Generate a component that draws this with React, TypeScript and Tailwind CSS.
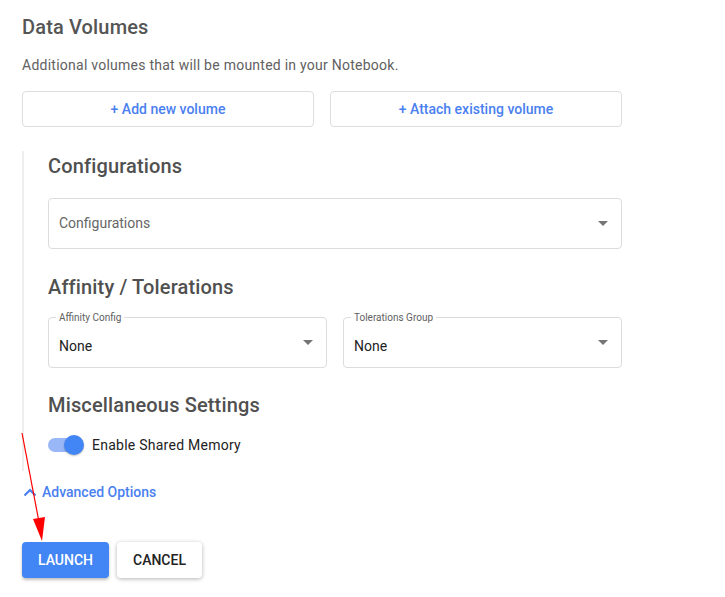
import React from "react";

const Caret = () => (
  <svg width="10" height="5" viewBox="0 0 10 5" className="shrink-0">
    <path d="M0 0 L10 0 L5 5 Z" fill="#757575" />
  </svg>
);

export default function App() {
  return (
    <div
      className="relative w-[725px] h-[597px] bg-white overflow-hidden"
      style={{ fontFamily: "Roboto, 'Liberation Sans', sans-serif" }}
    >
      <div className="pl-[22px] pr-[103px] pt-[15px]">
        <h2 className="text-[20px] leading-[24px] font-medium text-[#555555] tracking-[0.15px]">Data Volumes</h2>
        <p className="mt-[16px] text-[14px] leading-[20px] text-[#616161] tracking-[0.25px]">
          Additional volumes that will be mounted in your Notebook.
        </p>
        <div className="mt-[16px] flex gap-[16px]">
          <button className="flex-1 h-[36px] border border-[#dedede] rounded-[4px] text-[14px] font-medium text-[#4a7ff0]">
            + Add new volume
          </button>
          <button className="flex-1 h-[36px] border border-[#dedede] rounded-[4px] text-[14px] font-medium text-[#4a7ff0]">
            + Attach existing volume
          </button>
        </div>

        <div className="mt-[24px] flex">
          <div className="w-[2px] bg-[#eeeeee] h-[320px] shrink-0" />
          <div className="flex-1 pl-[24px]">
            <h3 className="text-[20px] leading-[24px] font-medium text-[#505050] mt-[3px] tracking-[0.15px]">Configurations</h3>
            <div className="mt-[20px] h-[51px] border border-[#dcdcdc] rounded-[4px] flex items-center justify-between pl-[10px] pr-[13px]">
              <span className="text-[14px] text-[#666666]">Configurations</span>
              <Caret />
            </div>

            <h3 className="mt-[26px] text-[20px] leading-[24px] font-medium text-[#505050] tracking-[0.15px]">Affinity / Tolerations</h3>
            <div className="mt-[18px] flex gap-[16px]">
              {["Affinity Config", "Tolerations Group"].map((l) => (
                <div key={l} className="relative flex-1 h-[51px] border border-[#dcdcdc] rounded-[4px] flex items-center justify-between pl-[10px] pr-[13px] pt-[8px]">
                  <span className="absolute left-[7px] -top-[6px] bg-white px-[3px] text-[10px] leading-[12px] text-[#616161]">{l}</span>
                  <span className="text-[14px] text-[#222222]">None</span>
                  <span className="-mt-[8px]"><Caret /></span>
                </div>
              ))}
            </div>

            <h3 className="mt-[25px] text-[20px] leading-[24px] font-medium text-[#505050] tracking-[0.15px]">Miscellaneous Settings</h3>
            <div className="mt-[18px] flex items-center h-[20px]">
              <div className="relative w-[36px] h-[20px] flex items-center">
                <div className="w-[32px] h-[14px] rounded-full bg-[#99b7f7]" />
                <div className="absolute right-0 top-0 w-[20px] h-[20px] rounded-full bg-[#4285f4] shadow-[0_1px_2px_rgba(0,0,0,0.25)]" />
              </div>
              <span className="ml-[8px] text-[14px] text-[#222222] tracking-[0.25px]">Enable Shared Memory</span>
            </div>
          </div>
        </div>

        <div className="mt-[11px] flex items-center h-[20px]">
          <svg width="14" height="10" viewBox="0 0 14 10" className="ml-[1px]">
            <path d="M1.5 8.5 L7 3 L12.5 8.5" stroke="#4a7ff0" strokeWidth="2.2" fill="none" />
          </svg>
          <span className="ml-[5px] text-[14px] font-medium text-[#4a7ff0]">Advanced Options</span>
        </div>

        <div className="mt-[40px] flex gap-[8px]">
          <button className="w-[87px] h-[36px] rounded-[4px] bg-[#4285f4] text-white text-[14px] font-medium shadow-[0_2px_3px_rgba(0,0,0,0.25)]">
            LAUNCH
          </button>
          <button className="w-[85px] h-[36px] rounded-[4px] bg-white text-[#222222] text-[14px] font-medium shadow-[0_1px_4px_rgba(0,0,0,0.3)]">
            CANCEL
          </button>
        </div>
      </div>

      <svg className="absolute left-0 top-0 pointer-events-none" width="725" height="597">
        <line x1="22" y1="433" x2="39" y2="522" stroke="#ff0000" strokeWidth="1.2" />
        <path d="M33 519 L45 517 L42 541 Z" fill="#ff0000" />
      </svg>
    </div>
  );
}
